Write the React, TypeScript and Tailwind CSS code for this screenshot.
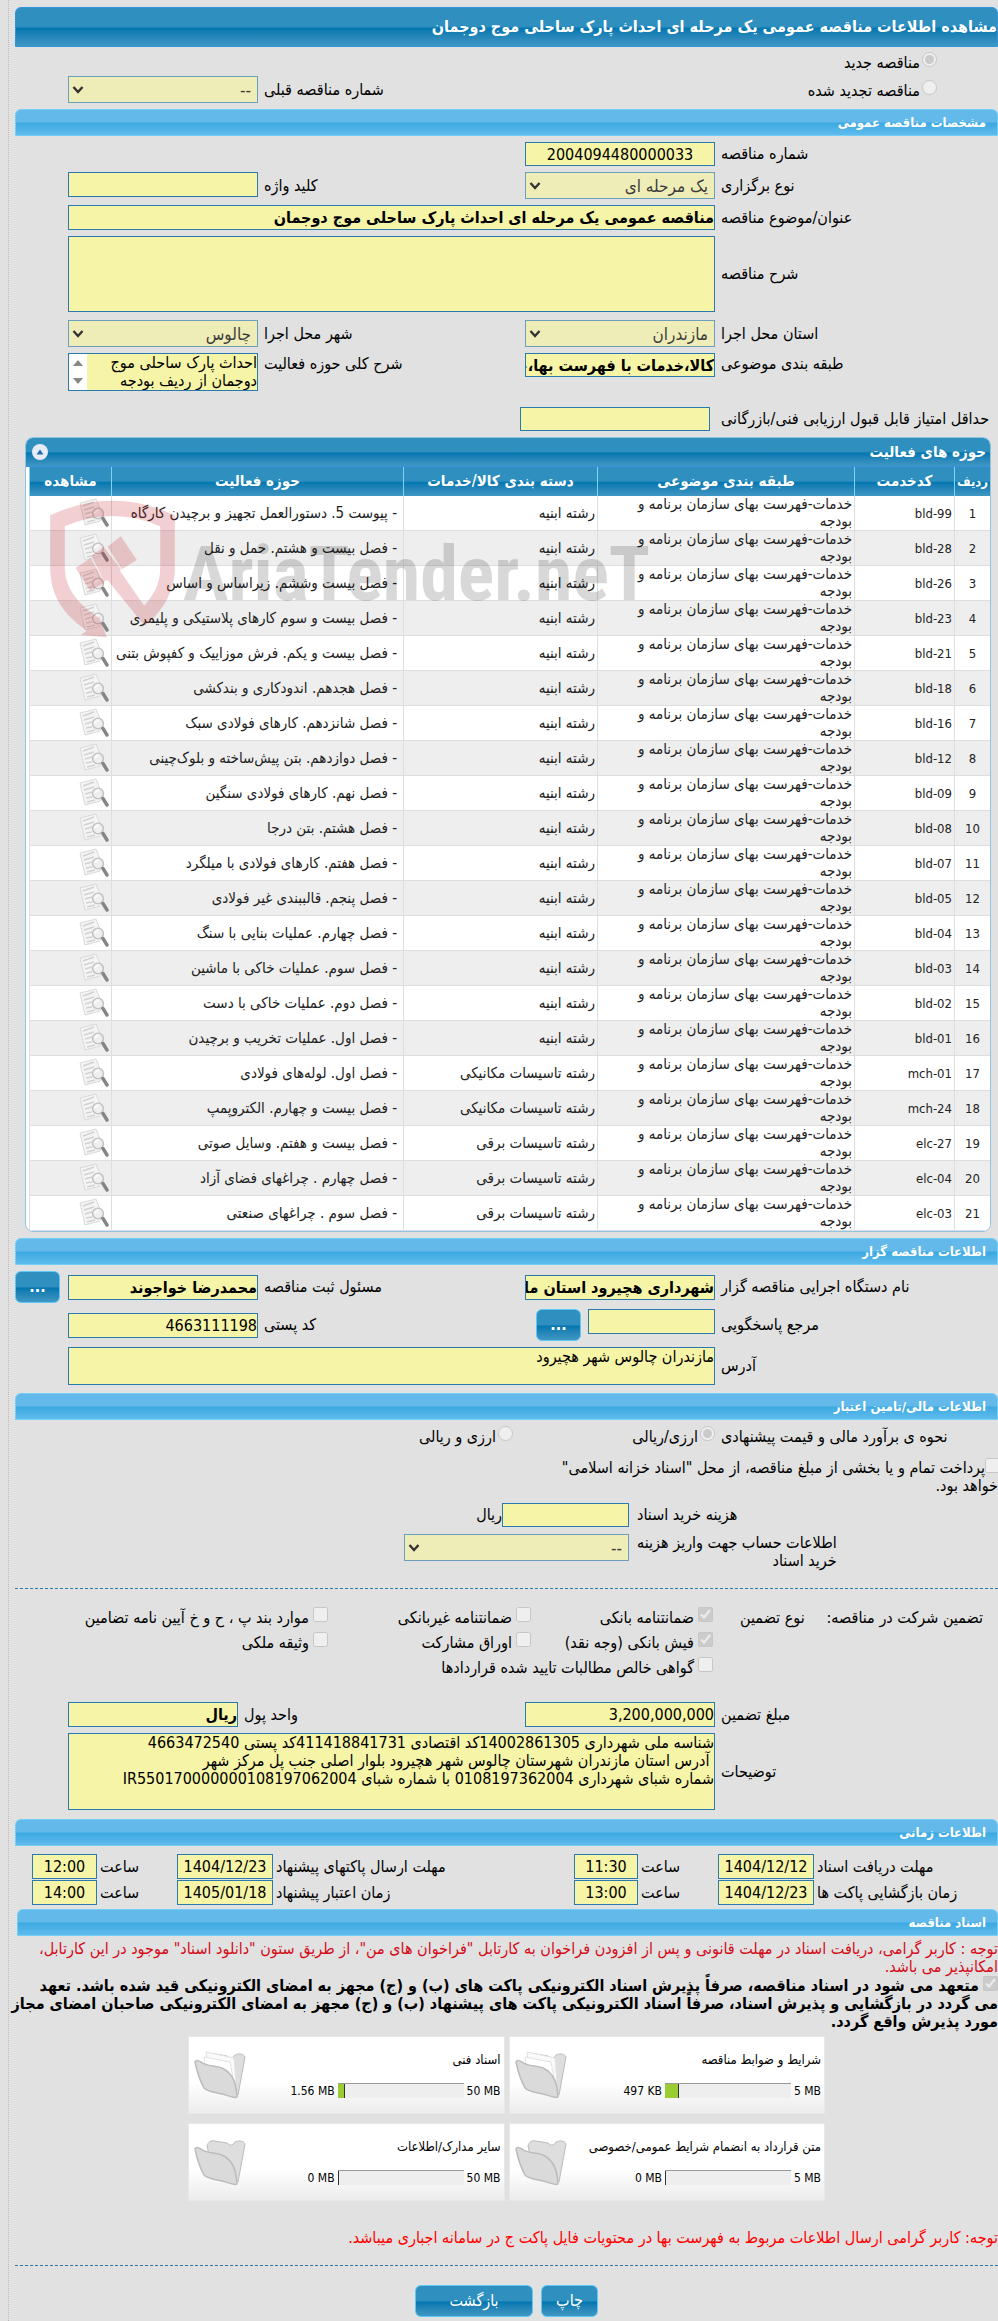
import type { ReactNode } from "react";
import { clsx } from "clsx";

const field =
  "box-border w-full border border-[#2a7aae] bg-[#f6f4a6] text-base leading-[18px] text-black outline-none rounded-none";

interface Activity {
  code: string;
  category: string;
  title: string;
}

const building = "رشته ابنیه";
const mechanical = "رشته تاسیسات مکانیکی";
const electrical = "رشته تاسیسات برقی";

const activities: Activity[] = [
  { code: "bld-99", category: building, title: "پیوست 5. دستورالعمل تجهیز و برچیدن کارگاه" },
  { code: "bld-28", category: building, title: "فصل بیست و هشتم. حمل و نقل" },
  { code: "bld-26", category: building, title: "فصل بیست وششم. زیراساس و اساس" },
  { code: "bld-23", category: building, title: "فصل بیست و سوم کارهای پلاستیکی و پلیمری" },
  { code: "bld-21", category: building, title: "فصل بیست و یکم. فرش موزاییک و کفپوش بتنی" },
  { code: "bld-18", category: building, title: "فصل هجدهم. اندودکاری و بندکشی" },
  { code: "bld-16", category: building, title: "فصل شانزدهم. کارهای فولادی سبک" },
  { code: "bld-12", category: building, title: "فصل دوازدهم. بتن پیش‌ساخته و بلوک‌چینی" },
  { code: "bld-09", category: building, title: "فصل نهم. کارهای فولادی سنگین" },
  { code: "bld-08", category: building, title: "فصل هشتم. بتن درجا" },
  { code: "bld-07", category: building, title: "فصل هفتم. کارهای فولادی با میلگرد" },
  { code: "bld-05", category: building, title: "فصل پنجم. قالببندی غیر فولادی" },
  { code: "bld-04", category: building, title: "فصل چهارم. عملیات بنایی با سنگ" },
  { code: "bld-03", category: building, title: "فصل سوم. عملیات خاکی با ماشین" },
  { code: "bld-02", category: building, title: "فصل دوم. عملیات خاکی با دست" },
  { code: "bld-01", category: building, title: "فصل اول. عملیات تخریب و برچیدن" },
  { code: "mch-01", category: mechanical, title: "فصل اول. لوله‌های فولادی" },
  { code: "mch-24", category: mechanical, title: "فصل بیست و چهارم. الکتروپمپ" },
  { code: "elc-27", category: electrical, title: "فصل بیست و هفتم. وسایل صوتی" },
  { code: "elc-04", category: electrical, title: "فصل چهارم . چراغهای فضای آزاد" },
  { code: "elc-03", category: electrical, title: "فصل سوم . چراغهای صنعتی" },
];

function SectionHeader({ children }: { children: ReactNode }) {
  return (
    <h2 className="flex h-[27px] items-center rounded-t-md border border-[#74cff7] bg-linear-to-b from-[#63b9e9] from-48% via-[#3aa9e2] via-52% to-[#60bbec] pr-[11px] text-[13px] font-bold text-white">
      {children}
    </h2>
  );
}

function Label({ htmlFor, children }: { htmlFor: string; children: ReactNode }) {
  return (
    <label htmlFor={htmlFor} className="self-center pl-1.5 text-left">
      {children}
    </label>
  );
}

interface InputProps {
  id: string;
  value?: string;
  className?: string;
}

function TextInput({ id, value = "", className = "h-[25px]" }: InputProps) {
  return <input id={id} type="text" readOnly defaultValue={value} className={clsx(field, className)} />;
}

function Select({ id, value, className }: InputProps) {
  return (
    <div className={clsx("relative", className)}>
      <select
        id={id}
        disabled
        className="h-[27px] w-full appearance-none border border-[#6aa0bb] bg-[#efedb7] pr-1.5 text-[17px] leading-5 text-[#3c3c3c] opacity-100"
      >
        <option>{value}</option>
      </select>
      <svg className="pointer-events-none absolute top-2 left-1 size-3" viewBox="0 0 12 12" fill="none" stroke="#333" strokeWidth="2.400">
        <path d="M1.5 3 6 8l4.5-5" />
      </svg>
    </div>
  );
}

function Tick({ id, checked = false, children }: { id: string; checked?: boolean; children: ReactNode }) {
  return (
    <div className="flex gap-1">
      <input id={id} type="checkbox" disabled defaultChecked={checked} className="m-0 size-[15px] shrink-0" />
      <label htmlFor={id} className="pt-0.5">
        {children}
      </label>
    </div>
  );
}

function Radio({ id, name, checked = false, children }: { id: string; name: string; checked?: boolean; children: ReactNode }) {
  return (
    <div className="flex items-start gap-0.5">
      <input id={id} name={name} type="radio" disabled defaultChecked={checked} className="m-0 size-[15px] shrink-0" />
      <label htmlFor={id} className="pt-0.5">
        {children}
      </label>
    </div>
  );
}

const darkBar = "bg-linear-to-b from-[#2f8fbf] from-48% via-[#0077b0] via-54% to-[#3f97c3]";

function GlossButton({ className, label, children }: { className: string; label?: string; children: ReactNode }) {
  return (
    <button type="button" aria-label={label} className={clsx("h-8 rounded-md border border-[#5cc8f5] text-base text-white", darkBar, className)}>
      {children}
    </button>
  );
}

function ViewIcon() {
  return (
    <svg className="size-[30px]" viewBox="0 0 30 30" fill="none">
      <path d="M1 5 17 1l7 17-3 5L6 27Z" fill="#f4f4f4" stroke="#dadada" />
      <path d="m4 8 11-4M5 12l10-3M6 16l7-2M7 20l6-1M8 24l8-2" stroke="#d2d2d2" strokeWidth="1.4" />
      <circle cx="19" cy="15.500" r="5.400" fill="#eeeeee" fillOpacity=".8" stroke="#c0c0c0" strokeWidth="1.4" />
      <path d="m15.5 15 4-3" stroke="#fff" strokeWidth="1.5" />
      <path d="m24 20.500 4 6.500" stroke="#858585" strokeWidth="3.400" strokeLinecap="round" />
    </svg>
  );
}

function FolderIcon({ full }: { full: boolean }) {
  return (
    <svg className="h-[48px] w-[54px]" viewBox="0 0 54 48" fill="none" stroke="#bcbcbc" strokeLinejoin="round">
      <path d="M14 8c1-4 4-6 8-5l12 2c3 3 5 3 8-1 4-2 9-1 10 2l-7 38L20 34Z" fill="#dedede" />
      {full && (
        <>
          <path d="m13 1 28 6 2 25-27-4Z" fill="#fafafa" stroke="#e2e2e2" />
          <path d="m11 6 26 5 4 22-27-3Z" fill="#fff" stroke="#e2e2e2" />
        </>
      )}
      <path d="M2 11q1-3 6 0c6 5 14 3 21 6 12 6 14 16 15 29-3 2-10-2-15-3-8-2-14-2-18-6Q5 26 2 11Z" fill="#dadada" strokeWidth="1.500" />
    </svg>
  );
}

function Watermark() {
  return (
    <div dir="ltr" aria-hidden className="pointer-events-none absolute top-[62px] left-[24px] flex items-start gap-2">
      <svg className="h-[138px] w-[125px] opacity-20" viewBox="90 58 374 414" fill="#c01722">
        <path d="M90 104Q277 16 464 104v161c-2 75-44 135-89 169l-25-24 22-35c28-30 48-65 48-110V137q-143-62-286 0v125c2 68 46 113 104 150l22 58-78-7 18-13C130 400 92 350 90 262Z" />
        <path d="m166 262 46-30 42 74-44 24ZM262 198l40-31 48 71-45 28ZM214 226l36-28 52 66-2 8 72 103v59L262 298l-10 4Z" />
      </svg>
      <span className="font-['Liberation_Sans_Narrow','Roboto_Condensed','DejaVu_Sans_Condensed'] text-[76px] leading-[148px] font-bold text-black opacity-15">
        AriaTender.neT
      </span>
    </div>
  );
}

function ActivityTable() {
  const head = "h-[29px] border-l border-[#7fd4f5] p-0 font-bold whitespace-nowrap";
  const cell = "border-b border-l border-[#dedede] px-0.5 py-0";

  return (
    <div className="relative mr-[7px] ml-2.5 overflow-hidden rounded-lg border border-[#8fc4e2] bg-white">
      <div className={clsx("flex h-[29px] items-center justify-between border-b border-[#3d8fe0] pr-1 pl-1.5 text-[15px] font-bold text-white", darkBar)}>
        <h3>حوزه های فعالیت</h3>
        <button type="button" aria-label="بستن جدول" className="flex size-4 items-center justify-center rounded-full bg-[#e6ecfa]">
          <svg className="size-2" viewBox="0 0 8 8" fill="#1f6fa8">
            <path d="m4 1.500 3.500 5h-7Z" />
          </svg>
        </button>
      </div>
      <table className="w-full table-fixed border-separate border-spacing-0 pl-[3px] text-[15px] leading-[17px] text-[#222]">
        <colgroup>
          <col className="w-[36px]" />
          <col className="w-[100px]" />
          <col className="w-[257px]" />
          <col className="w-[194px]" />
          <col />
          <col className="w-[82px]" />
        </colgroup>
        <thead className={clsx("text-white", darkBar)}>
          <tr>
            <th className={clsx(head, "text-[13px]")}>ردیف</th>
            <th className={head}>کدخدمت</th>
            <th className={head}>طبقه بندی موضوعی</th>
            <th className={head}>دسته بندی کالا/خدمات</th>
            <th className={head}>حوزه فعالیت</th>
            <th className={head}>مشاهده</th>
          </tr>
        </thead>
        <tbody>
          {activities.map((a, i) => (
            <tr key={a.code} className="h-[35px] odd:bg-white even:bg-[#eeeeee]">
              <td className={clsx(cell, "text-center text-[13px]")}>{i + 1}</td>
              <td className={clsx(cell, "text-[13px]")}>{a.code}</td>
              <td className={cell}>
                خدمات-فهرست بهای سازمان برنامه و<br />
                بودجه
              </td>
              <td className={cell}>{a.category}</td>
              <td className={clsx(cell, "pr-1.5 whitespace-nowrap")}>- {a.title}</td>
              <td className={cell}>
                <button type="button" aria-label={`مشاهده ${a.code}`} className="block">
                  <ViewIcon />
                </button>
              </td>
            </tr>
          ))}
        </tbody>
      </table>
      <Watermark />
    </div>
  );
}

interface DocCardProps {
  title: string;
  used: string;
  limit: string;
  percent: number;
}

function DocCard({ title, used, limit, percent }: DocCardProps) {
  return (
    <div className="flex h-[78px] items-center justify-between border border-[#e8e8e8] bg-linear-to-b from-white from-60% to-[#ececec] pr-[3px] pl-1 text-xs">
      <div className="flex flex-col gap-3.5">
        <span className="text-[13px]">{title}</span>
        <div dir="ltr" className="flex items-center justify-end gap-[3px]">
          <span>{used}</span>
          <div className="h-[15px] w-[126px] border-t border-[#999] bg-[#eeeeee]">
            <div className="h-full border-r border-[#333] bg-[#9acd32]" style={{ width: `${percent}%` }} />
          </div>
          <span>{limit}</span>
        </div>
      </div>
      <FolderIcon full={percent > 1} />
    </div>
  );
}

export default function App() {
  const formGrid = "grid grid-cols-[283px_190px_1fr_190px] gap-y-1.5 pl-[53px]";
  const timeInput = "h-[25px] text-center";
  const timeLabel = "self-center pl-[3px] text-left";

  return (
    <div dir="rtl" className="overflow-hidden bg-[#e1e1e1] pl-2 font-['DejaVu_Sans_Condensed','DejaVu_Sans',sans-serif] text-base leading-[18px] text-black">
      <main className="border-l border-dotted border-[#bbb] pt-[7px] pb-1.5 pl-1.5">
        <h1 className={clsx("flex h-10 items-center rounded-t-md border border-[#2f96dd] text-base font-bold text-white", darkBar)}>
          مشاهده اطلاعات مناقصه عمومی یک مرحله ای احداث پارک ساحلی موج دوجمان
        </h1>

        <div className="grid h-[62px] grid-cols-[1fr_190px] grid-rows-[24px_27px] pt-[5px] pl-[53px]">
          <div className="col-span-2 pr-[61px]">
            <Radio id="new" name="kind" checked>مناقصه جدید</Radio>
          </div>
          <div className="flex items-center justify-between pr-[61px]">
            <Radio id="renewed" name="kind">مناقصه تجدید شده</Radio>
            <Label htmlFor="previous">شماره مناقصه قبلی</Label>
          </div>
          <Select id="previous" value="--" />
        </div>

        <SectionHeader>مشخصات مناقصه عمومی</SectionHeader>
        <div className={clsx(formGrid, "pt-1.5")}>
          <Label htmlFor="number">شماره مناقصه</Label>
          <TextInput id="number" value="2004094480000033" className="h-6 text-center" />
          <div className="col-span-2" />
          <Label htmlFor="type">نوع برگزاری</Label>
          <Select id="type" value="یک مرحله ای" />
          <Label htmlFor="keyword">کلید واژه</Label>
          <TextInput id="keyword" />
          <Label htmlFor="subject">عنوان/موضوع مناقصه</Label>
          <TextInput id="subject" value="مناقصه عمومی یک مرحله ای احداث پارک ساحلی موج دوجمان" className="col-span-3 h-[25px] font-bold" />
          <Label htmlFor="summary">شرح مناقصه</Label>
          <textarea id="summary" readOnly className={clsx(field, "col-span-3 block h-[76px] resize-none")} />
        </div>
        <div className={clsx(formGrid, "pt-2")}>
          <Label htmlFor="province">استان محل اجرا</Label>
          <Select id="province" value="مازندران" />
          <Label htmlFor="city">شهر محل اجرا</Label>
          <Select id="city" value="چالوس" />
          <label htmlFor="class" className="pt-0.5 pl-1.5 text-left">طبقه بندی موضوعی</label>
          <TextInput id="class" value="کالا،خدمات با فهرست بها،خدمات" className="h-6 font-bold" />
          <label htmlFor="scope" className="pt-0.5 pl-1.5 text-left">شرح کلی حوزه فعالیت</label>
          <div className="flex h-[38px] border border-[#2a7aae] bg-[#f6f4a6]">
            <textarea
              id="scope"
              readOnly
              defaultValue="احداث پارک ساحلی موج دوجمان از ردیف بودجه"
              className="block min-w-0 flex-1 resize-none overflow-hidden text-base leading-[18px] outline-none"
            />
            <div className="flex w-[18px] flex-col items-center justify-between bg-white py-1.5 text-[#888]">
              <svg className="h-1.5 w-2.5" viewBox="0 0 10 6" fill="currentColor"><path d="m5 0 5 6H0Z" /></svg>
              <svg className="h-1.5 w-2.5" viewBox="0 0 10 6" fill="currentColor"><path d="m5 6 5-6H0Z" /></svg>
            </div>
          </div>
        </div>
        <div className="flex items-center pt-4 pb-1.5">
          <div className="flex w-[288px] justify-end pl-[5px]">
            <Label htmlFor="score">حداقل امتیاز قابل قبول ارزیابی فنی/بازرگانی</Label>
          </div>
          <div className="w-[190px]">
            <TextInput id="score" className="block h-6" />
          </div>
        </div>

        <ActivityTable />

        <div className="pt-1.5">
          <SectionHeader>اطلاعات مناقصه گزار</SectionHeader>
        </div>
        <div className="grid grid-cols-[283px_190px_1fr_190px_53px] items-center gap-y-1.5 pt-1.5">
          <Label htmlFor="org">نام دستگاه اجرایی مناقصه گزار</Label>
          <TextInput id="org" value="شهرداری هچیرود استان مازندران" className="h-[25px] font-bold" />
          <Label htmlFor="officer">مسئول ثبت مناقصه</Label>
          <TextInput id="officer" value="محمدرضا خواجوند" className="h-[25px] font-bold" />
          <GlossButton className="w-[45px] justify-self-end font-bold" label="انتخاب مسئول">...</GlossButton>
          <Label htmlFor="contact">مرجع پاسخگویی</Label>
          <div className="flex items-start gap-[7px]">
            <TextInput id="contact" className="h-[25px] max-w-[127px]" />
            <GlossButton className="w-[45px] shrink-0 font-bold" label="انتخاب مرجع">...</GlossButton>
          </div>
          <Label htmlFor="postal">کد پستی</Label>
          <TextInput id="postal" value="4663111198" />
          <div />
          <Label htmlFor="address">آدرس</Label>
          <textarea id="address" readOnly defaultValue="مازندران چالوس شهر هچیرود" className={clsx(field, "col-span-3 block h-[38px] resize-none")} />
        </div>

        <div className="pt-2">
          <SectionHeader>اطلاعات مالی/تامین اعتبار</SectionHeader>
        </div>
        <div className="flex pt-1.5">
          <span className="w-[283px] pt-0.5 pl-1.5 text-left">نحوه ی برآورد مالی و قیمت پیشنهادی</span>
          <div className="w-[202px]">
            <Radio id="rial" name="currency" checked>ارزی/ریالی</Radio>
          </div>
          <Radio id="both" name="currency">ارزی و ریالی</Radio>
        </div>
        <div className="pt-3">
          <input id="treasury" type="checkbox" disabled className="m-0 -mr-0.5 size-[15px]" />
          <label htmlFor="treasury">
            پرداخت تمام و یا بخشی از مبلغ مناقصه، از محل "اسناد خزانه اسلامی"
            <br />
            خواهد بود.
          </label>
        </div>
        <div className="grid grid-cols-[369px_127px_1fr] gap-y-[7px] pt-2">
          <label htmlFor="fee" className="self-center pl-2 text-left">هزینه خرید اسناد</label>
          <TextInput id="fee" className="h-6" />
          <span className="self-center">ریال</span>
          <div className="flex justify-end pl-2">
            <label htmlFor="account">
              اطلاعات حساب جهت واریز هزینه
              <br />
              خرید اسناد
            </label>
          </div>
          <Select id="account" value="--" className="col-span-2 w-[225px]" />
        </div>

        <hr className="mt-[18px] border-t border-dashed border-[#2a7aae]" />

        <div className="grid auto-rows-[25px] grid-cols-[285px_182px_203px_1fr] pt-[18px]">
          <div className="flex justify-between pt-0.5 pr-[15px] pl-[27px]">
            <span>تضمین شرکت در مناقصه:</span>
            <span>نوع تضمین</span>
          </div>
          <Tick id="g1" checked>ضمانتنامه بانکی</Tick>
          <Tick id="g2">ضمانتنامه غیربانکی</Tick>
          <Tick id="g3">موارد بند پ ، ح و خ آیین نامه تضامین</Tick>
          <div />
          <Tick id="g4" checked>فیش بانکی (وجه نقد)</Tick>
          <Tick id="g5">اوراق مشارکت</Tick>
          <Tick id="g6">وثیقه ملکی</Tick>
          <div className="col-start-2 col-end-4">
            <Tick id="g7">گواهی خالص مطالبات تایید شده قراردادها</Tick>
          </div>
        </div>

        <div className="grid grid-cols-[283px_190px_1fr_170px] gap-y-1.5 pt-5 pl-[53px]">
          <Label htmlFor="amount">مبلغ تضمین</Label>
          <TextInput id="amount" value="3,200,000,000" />
          <Label htmlFor="unit">واحد پول</Label>
          <TextInput id="unit" value="ریال" className="h-[25px] font-bold" />
          <Label htmlFor="notes">توضیحات</Label>
          <textarea
            id="notes"
            readOnly
            defaultValue={
              "شناسه ملی شهرداری 14002861305کد اقتصادی 411418841731کد پستی 4663472540\n آدرس استان مازندران شهرستان چالوس شهر هچیرود بلوار اصلی جنب پل مرکز شهر\nشماره شبای شهرداری 0108197362004 با شماره شبای IR550170000000108197062004"
            }
            className={clsx(field, "col-span-3 block h-[77px] resize-none")}
          />
        </div>

        <div className="pt-[9px]">
          <SectionHeader>اطلاعات زمانی</SectionHeader>
        </div>
        <div className="grid grid-cols-[184px_96px_80px_64px_1fr_96px_80px_65px] gap-y-px pt-2 pb-1 pl-[17px]">
          <label htmlFor="d1" className={timeLabel}>مهلت دریافت اسناد</label>
          <TextInput id="d1" value="1404/12/12" className={timeInput} />
          <label htmlFor="t1" className={timeLabel}>ساعت</label>
          <TextInput id="t1" value="11:30" className={timeInput} />
          <label htmlFor="d2" className={timeLabel}>مهلت ارسال پاکتهای پیشنهاد</label>
          <TextInput id="d2" value="1404/12/23" className={timeInput} />
          <label htmlFor="t2" className={timeLabel}>ساعت</label>
          <TextInput id="t2" value="12:00" className={timeInput} />
          <label htmlFor="d3" className={timeLabel}>زمان بازگشایی پاکت ها</label>
          <TextInput id="d3" value="1404/12/23" className={timeInput} />
          <label htmlFor="t3" className={timeLabel}>ساعت</label>
          <TextInput id="t3" value="13:00" className={timeInput} />
          <label htmlFor="d4" className={timeLabel}>زمان اعتبار پیشنهاد</label>
          <TextInput id="d4" value="1405/01/18" className={timeInput} />
          <label htmlFor="t4" className={timeLabel}>ساعت</label>
          <TextInput id="t4" value="14:00" className={timeInput} />
        </div>

        <div className="pl-0.5">
          <SectionHeader>اسناد مناقصه</SectionHeader>
          <p className="pt-1 text-[#d40b18]">
            توجه : کاربر گرامی، دریافت اسناد در مهلت قانونی و پس از افزودن فراخوان به کارتابل "فراخوان های من"، از طریق ستون "دانلود اسناد" موجود در این کارتابل، امکانپذیر می باشد.
          </p>
          <div className="font-bold whitespace-nowrap">
            <input id="commit" type="checkbox" disabled defaultChecked className="m-0 ml-1 size-[15px]" />
            <label htmlFor="commit">
              متعهد می شود در اسناد مناقصه، صرفاً پذیرش اسناد الکترونیکی پاکت های (ب) و (ج) مجهز به امضای الکترونیکی قید شده باشد. تعهد
              <br />
              می گردد در بازگشایی و پذیرش اسناد، صرفاً اسناد الکترونیکی پاکت های پیشنهاد (ب) و (ج) مجهز به امضای الکترونیکی صاحبان امضای مجاز
              <br />
              مورد پذیرش واقع گردد.
            </label>
          </div>
        </div>

        <div className="mx-auto grid w-[637px] grid-cols-2 gap-x-1 gap-y-[9px] pt-[5px]">
          <DocCard title="شرایط و ضوابط مناقصه" used="497 KB" limit="5 MB" percent={11} />
          <DocCard title="اسناد فنی" used="1.56 MB" limit="50 MB" percent={6} />
          <DocCard title="متن قرارداد به انضمام شرایط عمومی/خصوصی" used="0 MB" limit="5 MB" percent={1} />
          <DocCard title="سایر مدارک/اطلاعات" used="0 MB" limit="50 MB" percent={1} />
        </div>

        <p className="pt-7 text-[#ff0000]">
          توجه: کاربر گرامی ارسال اطلاعات مربوط به فهرست بها در محتویات فایل پاکت ج در سامانه اجباری میباشد.
        </p>
        <hr className="mt-[18px] border-t border-dashed border-[#2a7aae]" />
        <div className="flex justify-center gap-2 pt-[19px]">
          <GlossButton className="w-[57px]">چاپ</GlossButton>
          <GlossButton className="w-[118px]">بازگشت</GlossButton>
        </div>
      </main>
    </div>
  );
}
